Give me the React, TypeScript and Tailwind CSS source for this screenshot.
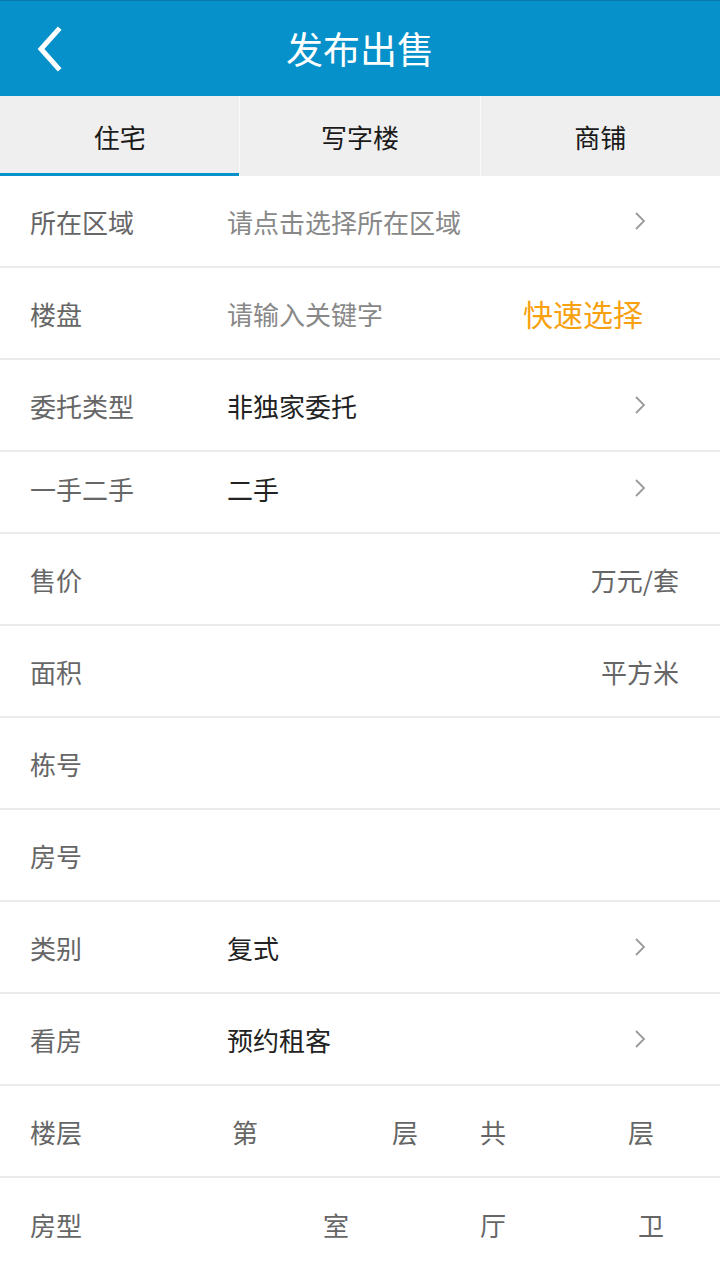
import { ReactNode } from "react";

const font = { fontFamily: '"Noto Sans CJK SC", "Noto Sans", sans-serif' };

function Chevron() {
  return (
    <svg width="12" height="20" viewBox="0 0 12 20" className="shrink-0">
      <polyline points="2,2 10,10 2,18" fill="none" stroke="#9a9a9a" strokeWidth="1.8" />
    </svg>
  );
}

type RowProps = {
  label: string;
  children?: ReactNode;
  short?: boolean;
};

function Row({ label, children, short }: RowProps) {
  return (
    <div
      className={`flex items-center border-b-2 border-[#ebebeb] pl-[30px] ${
        short ? "h-[82px] pb-[8px]" : "h-[92px]"
      }`}
    >
      <span className="w-[197px] shrink-0 text-[26px] text-[#666]">{label}</span>
      <div className="flex flex-1 items-center">{children}</div>
    </div>
  );
}

function Select({ value, placeholder }: { value?: string; placeholder?: string }) {
  return (
    <>
      <span className={`flex-1 text-[26px] ${value ? "text-[#222]" : "text-[#888]"}`}>
        {value ?? placeholder}
      </span>
      <span className="mr-[74px] flex items-center">
        <Chevron />
      </span>
    </>
  );
}

function Unit({ text }: { text: string }) {
  return (
    <>
      <span className="flex-1" />
      <span className="mr-[41px] text-[26px] text-[#666]">{text}</span>
    </>
  );
}

export default function App() {
  const tabs = ["住宅", "写字楼", "商铺"];

  return (
    <div className="min-h-[1280px] w-[720px] bg-white" style={font}>
      <header className="relative flex h-[96px] items-center justify-center border-t border-[#0b78ab] bg-[#0791ca]">
        <svg
          width="30"
          height="46"
          viewBox="0 0 30 46"
          className="absolute left-[34px] top-[25px]"
        >
          <polyline
            points="24,4 7,23 24,42"
            fill="none"
            stroke="#fff"
            strokeWidth="5"
            strokeLinecap="square"
          />
        </svg>
        <h1 className="text-[37px] text-white">发布出售</h1>
      </header>

      <nav className="flex h-[80px] bg-[#efefef]">
        {tabs.map((tab, i) => (
          <div
            key={tab}
            className={`flex flex-1 items-center justify-center text-[26px] text-[#1a1a1a] ${
              i > 0 ? "border-l border-[#fafafa]" : ""
            } ${i === 0 ? "border-b-[3px] border-[#0791ca] pt-[3px]" : ""}`}
          >
            {tab}
          </div>
        ))}
      </nav>

      <Row label="所在区域">
        <Select placeholder="请点击选择所在区域" />
      </Row>
      <Row label="楼盘">
        <span className="flex-1 text-[26px] text-[#888]">请输入关键字</span>
        <span className="mr-[77px] text-[30px] text-[#f7a10e]">快速选择</span>
      </Row>
      <Row label="委托类型">
        <Select value="非独家委托" />
      </Row>
      <Row label="一手二手" short>
        <Select value="二手" />
      </Row>
      <Row label="售价">
        <Unit text="万元/套" />
      </Row>
      <Row label="面积">
        <Unit text="平方米" />
      </Row>
      <Row label="栋号" />
      <Row label="房号" />
      <Row label="类别">
        <Select value="复式" />
      </Row>
      <Row label="看房">
        <Select value="预约租客" />
      </Row>
      <Row label="楼层">
        <div className="flex items-center text-[26px] text-[#666]">
          <span className="ml-[5px] w-[26px]">第</span>
          <span className="w-[134px]" />
          <span className="w-[26px]">层</span>
          <span className="w-[62px]" />
          <span className="w-[26px]">共</span>
          <span className="w-[122px]" />
          <span className="w-[26px]">层</span>
        </div>
      </Row>
      <div className="flex h-[92px] items-center pl-[30px]">
        <span className="w-[197px] shrink-0 text-[26px] text-[#666]">房型</span>
        <div className="flex items-center text-[26px] text-[#666]">
          <span className="w-[96px]" />
          <span className="w-[26px]">室</span>
          <span className="w-[131px]" />
          <span className="w-[26px]">厅</span>
          <span className="w-[132px]" />
          <span className="w-[26px]">卫</span>
        </div>
      </div>
    </div>
  );
}
